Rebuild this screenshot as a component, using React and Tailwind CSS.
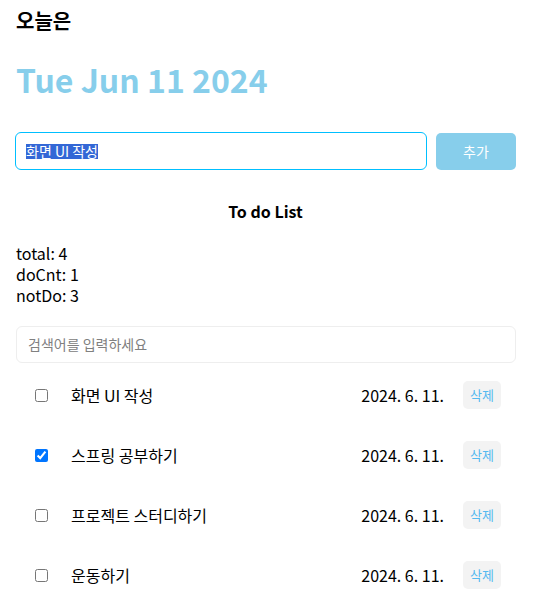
import React from "react";

const todos = [
  { id: 1, text: "화면 UI 작성", done: false },
  { id: 2, text: "스프링 공부하기", done: true },
  { id: 3, text: "프로젝트 스터디하기", done: false },
  { id: 4, text: "운동하기", done: false },
];

export default function App() {
  return (
    <div
      className="w-[541px] min-h-[615px] bg-white text-black pl-[15px]"
      style={{ fontFamily: '"Noto Sans CJK KR", "Noto Sans", sans-serif' }}
    >
      <div className="w-[501px]">
        <div className="pt-[6px] pl-px text-[20px] font-bold leading-[30px]">오늘은</div>
        <div className="mt-[21px] pl-px text-[32px] font-bold leading-[44px] text-[#87ceeb]">
          Tue Jun 11 2024
        </div>

        <div className="mt-[31px] flex items-center gap-[9px]">
          <div className="flex-1 h-[38px] border border-[#00bfff] rounded-[6px] flex items-center px-[10px]">
            <span className="inline-block bg-[#3367d6] text-white text-[14px] leading-[15px]">화면 UI 작성</span>
          </div>
          <button className="w-[80px] h-[37px] rounded-[5px] bg-[#87ceeb] text-white text-[14px]">
            추가
          </button>
        </div>

        <div className="mt-[30px] text-center text-[16px] font-bold leading-[22px]">To do List</div>

        <div className="mt-[21px] pl-px text-[16px] leading-[21px]">
          <div>total: 4</div>
          <div>doCnt: 1</div>
          <div>notDo: 3</div>
        </div>

        <div className="mt-[20px] ml-px h-[37px] border border-[#eeeeee] rounded-[6px] flex items-center px-[11px] text-[14px] text-[#808080]">
          검색어를 입력하세요
        </div>

        <div className="mt-[2px]">
          {todos.map((t) => (
            <div key={t.id} className="h-[60px] flex items-center pl-[20px] pr-[15px]">
              <input
                type="checkbox"
                defaultChecked={t.done}
                className="w-[13px] h-[13px] m-0 accent-[#0075ff]"
              />
              <span className="ml-[23px] text-[16px] flex-1">{t.text}</span>
              <span className="text-[16px]">2024. 6. 11.</span>
              <button className="ml-[19px] w-[38px] h-[28px] rounded-[5px] bg-[#f3f3f3] text-[#55b9f0] text-[13px]">
                삭제
              </button>
            </div>
          ))}
        </div>
      </div>
    </div>
  );
}
